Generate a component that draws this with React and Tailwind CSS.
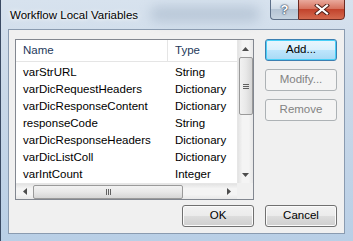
import React from 'react'

const rows = [
  { name: 'varStrURL', type: 'String' },
  { name: 'varDicRequestHeaders', type: 'Dictionary' },
  { name: 'varDicResponseContent', type: 'Dictionary' },
  { name: 'responseCode', type: 'String' },
  { name: 'varDicResponseHeaders', type: 'Dictionary' },
  { name: 'varDicListColl', type: 'Dictionary' },
  { name: 'varIntCount', type: 'Integer' },
]

const font = "font-['Segoe_UI','Liberation_Sans',Arial,sans-serif]"

const Button = ({ children, disabled, isDefault }) => {
  if (disabled) {
    return (
      <div className="w-[72px] h-[22px] rounded-[3px] border border-[#adb2b5] bg-[#f4f4f4] flex items-center justify-center text-[11.5px] text-[#838383]">
        {children}
      </div>
    )
  }
  return (
    <div
      className={
        'w-[72px] h-[22px] rounded-[3px] border flex items-center justify-center text-[11.5px] text-black ' +
        (isDefault
          ? 'border-[#3c7fb1] shadow-[inset_0_0_0_1px_#48d0f8] bg-[linear-gradient(#eaf6fd_0%,#d9f0fc_50%,#bee6fd_50%,#a7d9f5_100%)]'
          : 'border-[#707070] shadow-[inset_0_0_0_1px_#fbfbfb] bg-[linear-gradient(#f2f2f2_0%,#ebebeb_50%,#dddddd_50%,#cfcfcf_100%)]')
      }
    >
      {children}
    </div>
  )
}

const Arrow = ({ dir }) => {
  const pts = {
    up: '0,4 3.5,0 7,4',
    down: '0,0 3.5,4 7,0',
    left: '4,0 0,3.5 4,7',
    right: '0,0 4,3.5 0,7',
  }[dir]
  const w = dir === 'up' || dir === 'down' ? 7 : 4
  const h = dir === 'up' || dir === 'down' ? 4 : 7
  return (
    <svg width={w} height={h} viewBox={`0 0 ${w} ${h}`}>
      <polygon points={pts} fill="#4d4d4d" />
    </svg>
  )
}

const App = () => {
  return (
    <div className={`relative w-[353px] h-[241px] overflow-hidden bg-[linear-gradient(180deg,#d7e2ee_0%,#c9d8e8_40%,#b9cfe6_100%)] ${font}`}>
      {/* blurred background smudge behind glass */}
      <div className="absolute left-[150px] top-[6px] w-[110px] h-[16px] rounded-full bg-[#9fb0c4] opacity-50 blur-[6px]" />
      <div className="absolute left-0 top-0 bottom-0 w-[1px] bg-[#3a4a63]" />

      {/* title bar */}
      <div className="relative h-[29px] flex items-start">
        <div className="pl-[10px] pt-[7px] text-[11.5px] text-black [text-shadow:0_0_6px_#ffffff,0_0_3px_#ffffff]">
          Workflow Local Variables
        </div>
        <div className="ml-auto mr-[8px] flex h-[21px] -mt-[1px]">
          <div className="w-[28px] h-[21px] rounded-bl-[4px] border border-r-0 border-[#5d6f88] bg-[linear-gradient(#e6edf4_0%,#d0dbe6_45%,#b5c4d4_50%,#c6d3e0_100%)] flex items-center justify-center">
            <span className="text-[13px] font-bold text-white leading-none [text-shadow:0_0_1px_#34435a,0_0_1px_#34435a,0_0_2px_#34435a]">?</span>
          </div>
          <div className="w-[47px] h-[21px] rounded-br-[4px] border border-[#6b2a22] bg-[linear-gradient(#e9a99c_0%,#d7735f_45%,#c2432c_50%,#d46a4f_100%)] flex items-center justify-center">
            <svg width="16" height="11" viewBox="0 0 16 11">
              <path d="M3 1.5 L13 9.5 M13 1.5 L3 9.5" stroke="#4a1b14" strokeWidth="4" strokeLinecap="square" />
              <path d="M3 1.5 L13 9.5 M13 1.5 L3 9.5" stroke="#ffffff" strokeWidth="2.2" strokeLinecap="square" />
            </svg>
          </div>
        </div>
      </div>

      {/* client area */}
      <div className="mx-[8px] h-[205px] border border-[#8a9bb0] bg-[#f0f0f0] pl-[6px] pt-[9px] pr-[7px] flex flex-col">
        <div className="flex">
          {/* list view */}
          <div className="w-[239px] h-[161px] border border-[#828790] bg-white flex flex-col">
            <div className="flex flex-1 min-h-0">
              <div className="w-[221px] flex flex-col">
                <div className="h-[22px] flex border-b border-[#e5e5e5] text-[11.5px] text-[#1e395b]">
                  <div className="w-[152px] border-r border-[#e5e5e5] pl-[7px] flex items-center">Name</div>
                  <div className="flex-1 pl-[7px] flex items-center">Type</div>
                </div>
                <div className="pt-[2px]">
                  {rows.map((r) => (
                    <div key={r.name} className="h-[17px] flex items-center text-[11.5px] text-black">
                      <div className="w-[152px] pl-[7px] whitespace-nowrap">{r.name}</div>
                      <div className="pl-[7px] whitespace-nowrap">{r.type}</div>
                    </div>
                  ))}
                </div>
              </div>
              {/* vertical scrollbar */}
              <div className="w-[16px] bg-[linear-gradient(90deg,#e3e3e3,#f4f4f4_30%,#f4f4f4_70%,#e8e8e8)] border-l border-[#e6e6e6] flex flex-col items-center">
                <div className="h-[17px] flex items-center justify-center"><Arrow dir="up" /></div>
                <div className="w-[14px] h-[58px] rounded-[2px] border border-[#9a9a9a] bg-[linear-gradient(90deg,#f2f2f2,#e8e8e8_50%,#d6d6d6)] flex flex-col items-center justify-center gap-[1px]">
                  <div className="w-[6px] h-[1px] bg-[#606060]" />
                  <div className="w-[6px] h-[1px] bg-[#606060]" />
                  <div className="w-[6px] h-[1px] bg-[#606060]" />
                </div>
                <div className="flex-1" />
                <div className="h-[17px] flex items-center justify-center"><Arrow dir="down" /></div>
              </div>
            </div>
            {/* horizontal scrollbar */}
            <div className="h-[16px] flex">
              <div className="w-[221px] flex items-center bg-[linear-gradient(#e3e3e3,#f4f4f4_30%,#f4f4f4_70%,#e8e8e8)] border-t border-[#e6e6e6]">
                <div className="w-[17px] flex justify-center"><Arrow dir="left" /></div>
                <div className="w-[150px] h-[14px] rounded-[2px] border border-[#9a9a9a] bg-[linear-gradient(#f2f2f2,#e8e8e8_50%,#d6d6d6)] flex items-center justify-center gap-[1px]">
                  <div className="w-[1px] h-[6px] bg-[#606060]" />
                  <div className="w-[1px] h-[6px] bg-[#606060]" />
                  <div className="w-[1px] h-[6px] bg-[#606060]" />
                </div>
                <div className="flex-1 flex justify-end pr-[6px]"><Arrow dir="right" /></div>
              </div>
              <div className="w-[16px] bg-[#f0f0f0]" />
            </div>
          </div>

          {/* side buttons */}
          <div className="ml-[11px] flex flex-col gap-[8px]">
            <Button isDefault>Add...</Button>
            <Button disabled>Modify...</Button>
            <Button disabled>Remove</Button>
          </div>
        </div>

        <div className="mt-[5px] flex justify-end gap-[11px]">
          <Button>OK</Button>
          <Button>Cancel</Button>
        </div>
      </div>
    </div>
  )
}

export default App
